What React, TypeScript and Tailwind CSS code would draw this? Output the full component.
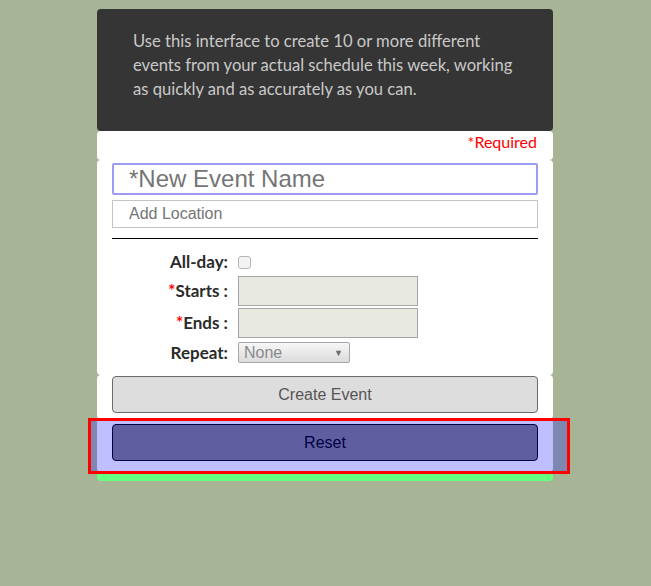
import React from 'react';

export default function App() {
  return (
    <div className="min-h-screen w-full bg-[#a7b596] pt-[9px]" style={{ fontFamily: 'Lato, "Open Sans", sans-serif' }}>
      <div className="ml-[97px] w-[456px]">
        {/* intro */}
        <div className="rounded-[4px] bg-[#353535] px-[36px] pt-[20px] pb-[30px] text-[16.6px] leading-[24px] text-[#c9c9c9]">
          Use this interface to create 10 or more different events from your actual schedule this week, working as quickly and as accurately as you can.
        </div>

        <div className="flex h-[29px] items-start justify-end rounded-[4px] bg-white pt-[1px] pr-[16px] text-[16px] leading-[20px] text-[#ff0000]">
          *Required
        </div>

        {/* fields */}
        <div className="rounded-[4px] bg-white px-[15px] pt-[3px] pb-[12px]">
          <input
            autoFocus
            placeholder="*New Event Name"
            className="block h-[32px] w-full rounded-[2px] border-2 border-[#9c9cf2] pl-[15px] text-[24px] text-black caret-black outline-none placeholder:text-[#757575]"
            style={{ fontFamily: '"Liberation Sans", Arial, sans-serif' }}
          />
          <input
            placeholder="Add Location"
            className="mt-[5px] block h-[28px] w-full border border-[#c4c4c4] pl-[16px] text-[16px] outline-none placeholder:text-[#757575]"
            style={{ fontFamily: '"Liberation Sans", Arial, sans-serif' }}
          />
          <div className="mt-[10px] h-px w-full bg-black" />

          <div className="mt-[13px] flex flex-col text-[17px] leading-[20px] font-bold text-[#2b2b2b]">
            <div className="flex h-[20px] items-center">
              <span className="w-[116px] text-right">All-day:</span>
              <span className="ml-[10px] h-[13px] w-[13px] rounded-[3px] border border-[#b5b5b5] bg-[#f3f3f3]" />
            </div>
            <div className="mt-[4px] flex h-[30px] items-center">
              <span className="w-[116px] text-right"><span className="text-[#ff0000]">*</span>Starts :</span>
              <span className="ml-[10px] h-[30px] w-[180px] border border-[#a6a6a6] bg-[#e8eae2]" />
            </div>
            <div className="mt-[2px] flex h-[30px] items-center">
              <span className="w-[116px] text-right"><span className="text-[#ff0000]">*</span>Ends :</span>
              <span className="ml-[10px] h-[30px] w-[180px] border border-[#a6a6a6] bg-[#e8eae2]" />
            </div>
            <div className="mt-[4px] flex h-[21px] items-center">
              <span className="w-[116px] text-right">Repeat:</span>
              <div
                className="ml-[10px] flex h-[21px] w-[112px] items-center justify-between rounded-[2px] border border-[#a6a6a6] bg-gradient-to-b from-[#f7f7f7] to-[#dcdcdc] pl-[5px] pr-[6px] text-[16px] font-normal text-[#8a8a8a]"
                style={{ fontFamily: '"Liberation Sans", Arial, sans-serif' }}
              >
                <span>None</span>
                <span className="text-[9px] text-[#6b6b6b]">▼</span>
              </div>
            </div>
          </div>
        </div>

        {/* create */}
        <div className="rounded-[4px] bg-white px-[15px] pt-[1px] pb-[6px]">
          <button
            className="block h-[37px] w-full rounded-[4px] border border-[#6b6b6b] bg-[#dddddd] text-[16px] text-[#555555]"
            style={{ fontFamily: '"Liberation Sans", Arial, sans-serif' }}
          >
            Create Event
          </button>
        </div>

        {/* reset, highlighted */}
        <div className="relative">
          <div className="rounded-[4px] bg-white px-[15px] pt-[5px] pb-[11px]">
            <button
              className="block h-[37px] w-full rounded-[4px] border border-black bg-[#7f7f7f] text-[16px] text-black"
              style={{ fontFamily: '"Liberation Sans", Arial, sans-serif' }}
            >
              Reset
            </button>
          </div>
          <div className="absolute top-[-1px] bottom-[-2px] left-[-9px] right-[-17px] border-[3px] border-[#ff0000] bg-[rgba(0,0,255,0.25)]" />
        </div>
        <div className="h-[9px] rounded-b-[4px] bg-[#66ff80]" />
      </div>
    </div>
  );
}
